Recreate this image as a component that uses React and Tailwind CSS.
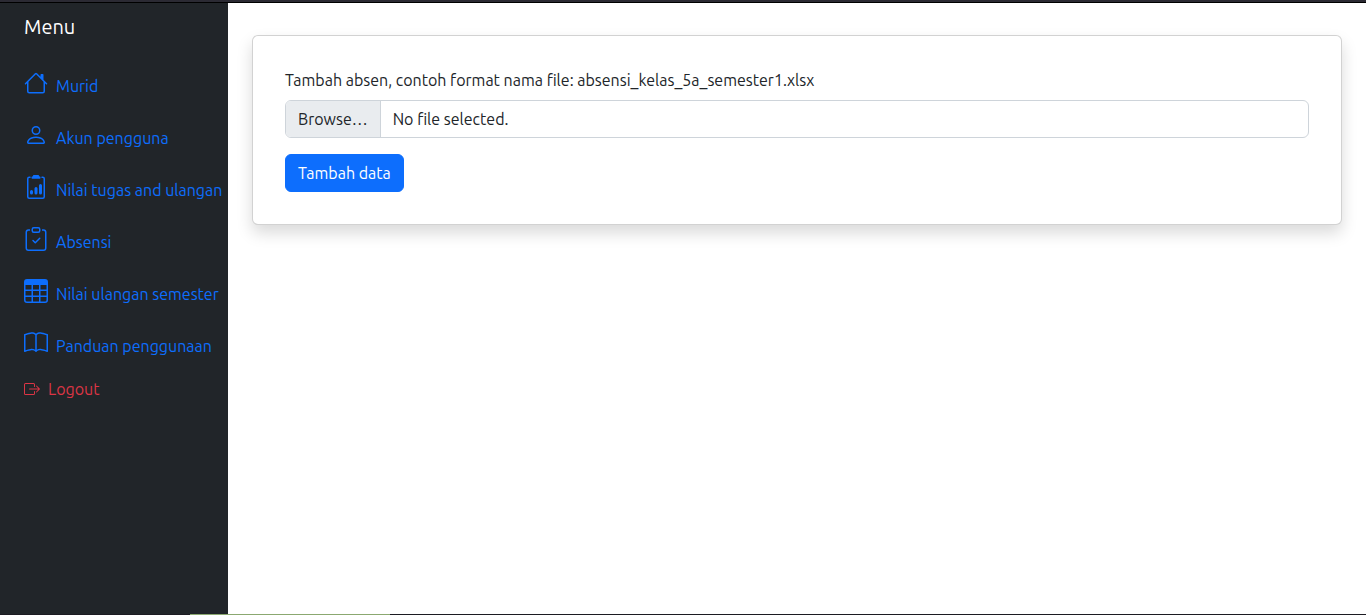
import { useState } from 'react'
import {
  BsHouse,
  BsPerson,
  BsClipboard2Data,
  BsClipboardCheck,
  BsTable,
  BsBook,
  BsBoxArrowRight,
} from 'react-icons/bs'

const links = [
  { label: 'Murid', Icon: BsHouse },
  { label: 'Akun pengguna', Icon: BsPerson },
  { label: 'Nilai tugas and ulangan', Icon: BsClipboard2Data },
  { label: 'Absensi', Icon: BsClipboardCheck },
  { label: 'Nilai ulangan semester', Icon: BsTable },
  { label: 'Panduan penggunaan', Icon: BsBook },
]

function Sidebar() {
  return (
    <aside className="w-[228px] shrink-0 bg-[#212529] pl-6 pt-2">
      <h1 className="text-[20px] leading-8 text-white">Menu</h1>
      <nav className="mt-7 whitespace-nowrap">
        <ul className="flex flex-col gap-[25px]">
          {links.map(({ label, Icon }) => (
            <li key={label}>
              <a href="#" className="flex items-end gap-2 text-[#0d6efd]">
                <Icon aria-hidden="true" className="mb-[3px] size-6 shrink-0" />
                {label}
              </a>
            </li>
          ))}
        </ul>
        <a href="#" className="mt-[19px] flex items-center gap-2 text-[#dc3545]">
          <BsBoxArrowRight aria-hidden="true" className="size-4 shrink-0" />
          Logout
        </a>
      </nav>
    </aside>
  )
}

function UploadForm() {
  const [fileName, setFileName] = useState('')
  return (
    <form
      className="rounded-md border border-black/[0.175] bg-white p-8 shadow-[0_8px_16px_rgba(0,0,0,0.15)]"
      onSubmit={(e) => e.preventDefault()}
    >
      <label htmlFor="absen" className="mb-2 block">
        Tambah absen, contoh format nama file: absensi_kelas_5a_semester1.xlsx
      </label>
      <input
        id="absen"
        type="file"
        accept=".xlsx"
        className="peer sr-only"
        onChange={(e) => setFileName(e.target.files[0]?.name ?? '')}
      />
      <label
        htmlFor="absen"
        className="flex overflow-hidden rounded-md border border-[#ced4da] bg-white peer-focus-visible:ring-4 peer-focus-visible:ring-[#0d6efd]/25"
      >
        <span className="border-r border-[#ced4da] bg-[#e9ecef] px-3 py-1.5">Browse…</span>
        <span className="px-3 py-1.5">{fileName || 'No file selected.'}</span>
      </label>
      <button
        type="submit"
        className="mt-4 rounded-md border border-[#0d6efd] bg-[#0d6efd] px-3 py-1.5 text-white"
      >
        Tambah data
      </button>
    </form>
  )
}

export default function App() {
  return (
    <div className="flex min-h-screen flex-col bg-white font-['Ubuntu','Noto_Sans',sans-serif] text-[16px] leading-6 text-[#212529]">
      <div className="h-[3px] border-b border-black bg-[#2b2a33]" />
      <div className="flex grow">
        <Sidebar />
        <main className="min-w-0 grow px-6 pt-8">
          <UploadForm />
        </main>
      </div>
      <div className="flex h-px bg-[#1c1b22] pl-[190px]">
        <div className="w-[200px] bg-[#8ba870]" />
      </div>
    </div>
  )
}
